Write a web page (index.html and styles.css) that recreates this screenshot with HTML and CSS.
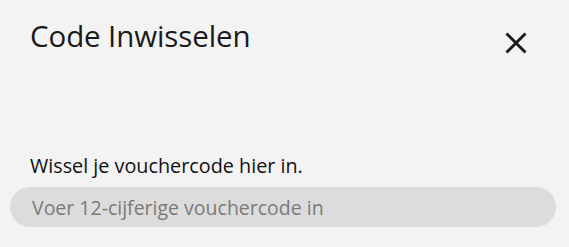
FILE: index.html
```html
<!DOCTYPE html>
<html lang="nl">
<head>
    <meta charset="UTF-8">
    <meta name="viewport" content="width=device-width, initial-scale=1.0">
    <title>Code Inwisselen</title>
    <link rel="stylesheet" href="styles.css">
</head>
<body>

<div class="dialog">
    <div class="dialog-header">
        <h2>Code Inwisselen</h2>
        <button class="close-btn" aria-label="Sluiten">
            <svg width="22" height="22" viewBox="0 0 22 22">
                <path d="M1.5 1.5 L20.5 20.5 M20.5 1.5 L1.5 20.5" stroke="#1a1a1a" stroke-width="3" fill="none"/>
            </svg>
        </button>
    </div>

    <p class="intro">Wissel je vouchercode hier in.</p>
    <input type="text" class="voucher-input" placeholder="Voer 12-cijferige vouchercode in">
</div>

</body>
</html>
```

FILE: styles.css
```css
body {
    font-family: "Open Sans", sans-serif;
    margin: 0;
    padding: 0;
    background-color: #f3f3f3;
}
.dialog {
    padding: 0 13px 0 10px;
}
.dialog-header {
    display: flex;
    justify-content: space-between;
    align-items: flex-start;
    padding: 16px 29px 0 20px;
}
h2 {
    margin: 0;
    font-size: 29.5px;
    font-weight: 400;
    color: #1a1a1a;
    line-height: 40px;
    letter-spacing: -0.1px;
}
.close-btn {
    background: none;
    border: none;
    padding: 0;
    margin-top: 16px;
    cursor: pointer;
}
.close-btn svg {
    display: block;
}
.intro {
    margin: 96px 0 0 20px;
    font-size: 19.8px;
    line-height: 27px;
    color: #111111;
}
.voucher-input {
    display: block;
    box-sizing: border-box;
    width: 100%;
    height: 40px;
    margin-top: 8px;
    padding: 0 22px;
    border: none;
    border-radius: 20px;
    background-color: #dcdcdc;
    font-family: "Open Sans", sans-serif;
    font-size: 19.5px;
    outline: none;
}
.voucher-input::placeholder {
    color: #7a7a7a;
}
```
